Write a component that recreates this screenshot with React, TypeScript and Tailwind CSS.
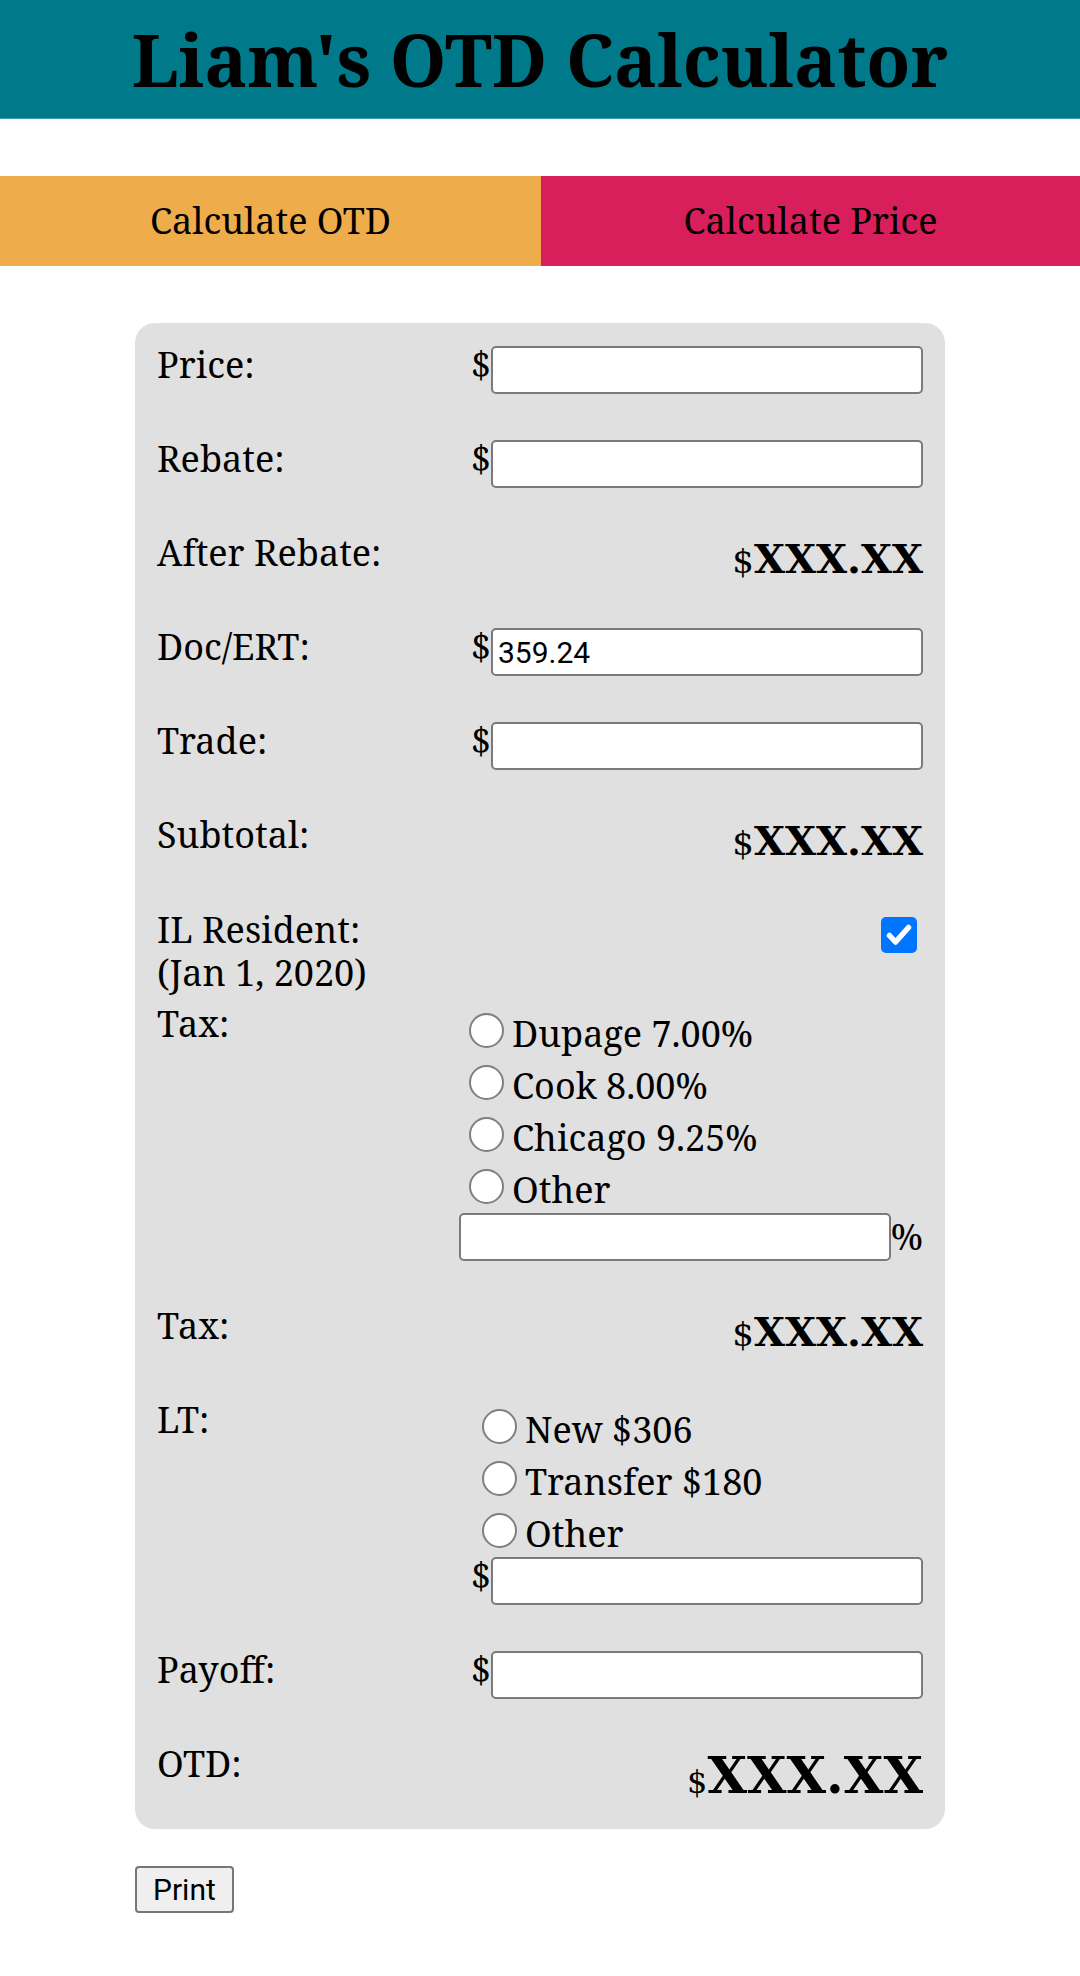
import { useState } from "react";

const serif = "font-['Noto_Serif','DejaVu_Serif',serif]";
const valueFont = "font-['DejaVu_Serif',serif]";
const inputCls =
  "shrink-0 w-[432px] h-[48px] rounded-[5px] border-2 border-[#7a7a7a] bg-white px-[5px] font-['Roboto','Liberation_Sans',sans-serif] text-[30px] text-black outline-none";
const radioCls =
  "appearance-none w-[35px] h-[35px] rounded-full border-2 border-[#7f7f7f] bg-white checked:border-[11px] checked:border-[#0075ff] shrink-0";

const InputRow = ({ label, value }: { label: string; value?: string }) => (
  <div className="flex h-[48px] items-start justify-between mb-[46px]">
    <span className="-mt-[2px] leading-[42px]">{label}</span>
    <div className="flex items-start">
      <span className="-mt-[2px] leading-[42px]">$</span>
      <input type="text" className={inputCls} defaultValue={value} />
    </div>
  </div>
);

const ValueRow = ({ label }: { label: string }) => (
  <div className="flex h-[48px] items-start justify-between mb-[46px]">
    <span className="-mt-[2px] leading-[42px]">{label}</span>
    <span className={`${valueFont} mt-[4px] leading-[42px] flex items-baseline`}>
      <span className="text-[34px]">$</span>
      <b className="text-[40px]">XXX.XX</b>
    </span>
  </div>
);

const RadioOption = ({
  name,
  label,
  checked,
  onPick,
}: {
  name: string;
  label: string;
  checked: boolean;
  onPick: () => void;
}) => (
  <label className="flex h-[52px] items-start">
    <input type="radio" name={name} checked={checked} onChange={onPick} className={`${radioCls} mt-[8px]`} />
    <span className="ml-[8px] mt-[8px] leading-[42px]">{label}</span>
  </label>
);

export default function App() {
  const [tab, setTab] = useState("otd");
  const [resident, setResident] = useState(true);
  const [tax, setTax] = useState("");
  const [lt, setLt] = useState("");

  return (
    <div className={`${serif} min-h-screen w-full bg-white text-black text-[36px]`}>
      {/* Header */}
      <header className="flex h-[119px] items-center justify-center bg-[#007a8b] border-b border-[#3aa3b1]">
        <h1 className="text-[72px] font-bold leading-none">Liam's OTD Calculator</h1>
      </header>

      {/* Tabs */}
      <div className="mt-[57px] flex h-[90px]">
        <button
          onClick={() => setTab("otd")}
          className="flex w-[541px] items-center justify-center bg-[#eead4a] text-[36px]"
        >
          Calculate OTD
        </button>
        <button
          onClick={() => setTab("price")}
          className="flex flex-1 items-center justify-center bg-[#d81e5b] text-[36px]"
        >
          Calculate Price
        </button>
      </div>

      <div className="mx-auto w-[810px]">
        {/* Form panel */}
        <div className="mt-[57px] rounded-[20px] bg-[#e0e0e0] px-[22px] pt-[23px] pb-[20px]" data-tab={tab}>
          <InputRow label="Price:" />
          <InputRow label="Rebate:" />
          <ValueRow label="After Rebate:" />
          <InputRow label="Doc/ERT:" value="359.24" />
          <InputRow label="Trade:" />
          <ValueRow label="Subtotal:" />

          {/* IL Resident */}
          <div className="flex items-start justify-between mb-[11px]">
            <div className="-mt-[2px] leading-[43px]">
              <div>IL Resident:</div>
              <div>(Jan 1, 2020)</div>
            </div>
            <label className="relative mt-[7px] mr-[6px] h-[36px] w-[36px]">
              <input
                type="checkbox"
                checked={resident}
                onChange={() => setResident(!resident)}
                className="appearance-none block h-[36px] w-[36px] rounded-[5px] border-2 border-[#7f7f7f] bg-white checked:border-0 checked:bg-[#0075ff]"
              />
              {resident && (
                <svg viewBox="0 0 36 36" className="pointer-events-none absolute inset-0 h-[36px] w-[36px]">
                  <path d="M8.5 18.5l6 6.5L27.5 10.5" fill="none" stroke="white" strokeWidth="5.5" strokeLinecap="round" strokeLinejoin="round" />
                </svg>
              )}
            </label>
          </div>

          {/* Tax rate */}
          <div className="flex items-start justify-between mb-[46px]">
            <span className="-mt-[2px] leading-[42px]">Tax:</span>
            <div className="flex w-[454px] flex-col">
              <RadioOption name="tax" label="Dupage 7.00%" checked={tax === "dupage"} onPick={() => setTax("dupage")} />
              <RadioOption name="tax" label="Cook 8.00%" checked={tax === "cook"} onPick={() => setTax("cook")} />
              <RadioOption name="tax" label="Chicago 9.25%" checked={tax === "chicago"} onPick={() => setTax("chicago")} />
              <RadioOption name="tax" label="Other" checked={tax === "other"} onPick={() => setTax("other")} />
              <div className="flex items-center justify-end">
                <input type="text" className={inputCls} />
                <span className="leading-[42px]">%</span>
              </div>
            </div>
          </div>

          <ValueRow label="Tax:" />

          {/* LT */}
          <div className="flex items-start justify-between mb-[46px]">
            <span className="-mt-[2px] leading-[42px]">LT:</span>
            <div className="flex w-[454px] flex-col">
              <div className="pl-[13px]">
                <RadioOption name="lt" label="New $306" checked={lt === "new"} onPick={() => setLt("new")} />
                <RadioOption name="lt" label="Transfer $180" checked={lt === "transfer"} onPick={() => setLt("transfer")} />
                <RadioOption name="lt" label="Other" checked={lt === "other"} onPick={() => setLt("other")} />
              </div>
              <div className="flex items-start justify-end">
                <span className="-mt-[2px] leading-[42px]">$</span>
                <input type="text" className={inputCls} />
              </div>
            </div>
          </div>

          <InputRow label="Payoff:" />

          {/* OTD */}
          <div className="flex h-[64px] items-start justify-between">
            <span className="-mt-[2px] leading-[42px]">OTD:</span>
            <span className={`${valueFont} leading-[60px] flex items-baseline`}>
              <span className="text-[32px]">$</span>
              <b className="text-[51px]">XXX.XX</b>
            </span>
          </div>
        </div>

        <button
          onClick={() => window.print()}
          className="mt-[37px] h-[47px] rounded-[4px] border-2 border-[#767676] bg-[#efefef] px-[16px] font-['Roboto','Liberation_Sans',sans-serif] text-[30px] leading-none text-black"
        >
          Print
        </button>
      </div>
    </div>
  );
}
